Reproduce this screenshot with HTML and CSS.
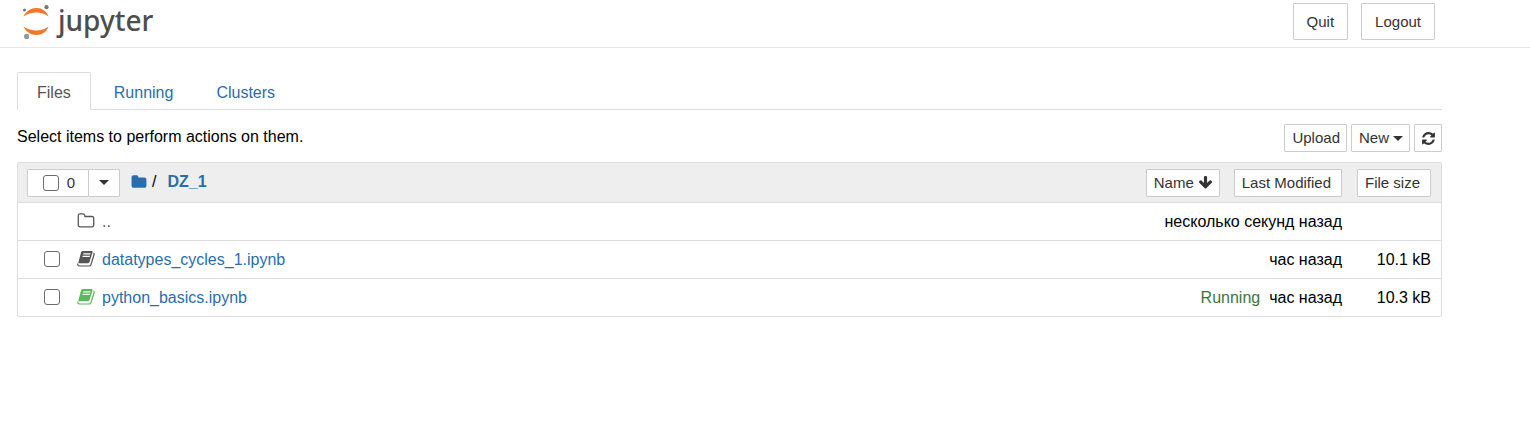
FILE: index.html
```html
<!DOCTYPE html>
<html lang="en">
<head>
<meta charset="utf-8">
<title>Jupyter Notebook</title>
<link rel="stylesheet" href="styles.css">
</head>
<body>
<svg class="sprite" aria-hidden="true">
  <symbol id="folder" viewBox="0 0 1792 1792"><path d="M1728 608v704q0 92-66 158t-158 66h-1216q-92 0-158-66t-66-158v-960q0-92 66-158t158-66h320q92 0 158 66t66 158v32h672q92 0 158 66t66 158z"/></symbol>
  <symbol id="folder-open" viewBox="0 0 1792 1792"><path d="M1600 1312v-704q0-40-28-68t-68-28h-704q-40 0-68-28t-28-68v-64q0-40-28-68t-68-28h-320q-40 0-68 28t-28 68v960q0 40 28 68t68 28h1216q40 0 68-28t28-68zm128-704v704q0 92-66 158t-158 66h-1216q-92 0-158-66t-66-158v-960q0-92 66-158t158-66h320q92 0 158 66t66 158v32h672q92 0 158 66t66 158z"/></symbol>
  <symbol id="book" viewBox="0 0 18 18">
    <path fill-rule="evenodd" d="M5.500 1h9q1.500 0 1 1.500l-3 9.500q-.4 1.200-1.800 1.200H1.200L4 2.500Q4.400 1 5.500 1zM6.500 3.300l-.4 1.200h7.200l.4-1.200zM5.800 5.700l-.4 1.200h7.200l.4-1.200z"/>
    <path fill="none" stroke="currentColor" stroke-width="1.200" stroke-linejoin="round" d="M16.400 3q1 .5.700 1.500l-3.200 10.300q-.3 1.200-1.700 1.200H2.700q-2.200 0-1.900-2.300"/>
  </symbol>
  <symbol id="refresh" viewBox="0 0 1792 1792"><path d="M1639 1056q0 5-1 7-64 268-268 434.500t-478 166.500q-146 0-282.500-55t-243.500-157l-129 129q-19 19-45 19t-45-19-19-45v-448q0-26 19-45t45-19h448q26 0 45 19t19 45-19 45l-137 137q71 66 161 102t187 36q134 0 250-65t186-179q11-17 53-117 8-23 30-23h192q13 0 22.500 9.500t9.500 22.500zm25-800v448q0 26-19 45t-45 19h-448q-26 0-45-19t-19-45 19-45l138-138q-148-137-349-137-134 0-250 65t-186 179q-11 17-53 117-8 23-30 23h-199q-13 0-22.500-9.500t-9.500-22.500v-7q65-268 270-434.500t480-166.500q146 0 284 55.500t245 156.500l130-129q19-19 45-19t45 19 19 45z"/></symbol>
  <symbol id="arrow-down" viewBox="0 0 1792 1792"><path d="M1675 832q0 53-37 90l-651 652q-39 37-91 37-53 0-90-37l-651-652q-38-36-38-90 0-53 38-91l74-75q39-37 91-37 53 0 90 37l294 294v-704q0-52 38-90t90-38h128q52 0 90 38t38 90v704l294-294q37-37 90-37 52 0 91 37l75 75q37 39 37 91z"/></symbol>
</svg>

<header class="header">
  <a class="brand" href="#">
    <svg class="brand-mark" viewBox="0 0 28 36" aria-hidden="true">
      <path fill="#f37726" d="M1.500 13.500C4 8 9 5 14.500 5s10 3 12 8.500C23 10.800 19 9.600 14.500 9.600S5 10.800 1.500 13.500z"/>
      <path fill="#f37726" d="M1.500 23.500C4 29 9 32 14.500 32s10-3 12-8.500C23 26.200 19 27.400 14.500 27.400S5 26.200 1.500 23.500z"/>
      <circle fill="#767677" cx="24.500" cy="4.200" r="2.100"/>
      <circle fill="#767677" cx="2.500" cy="7" r="1.500"/>
      <circle fill="#989798" cx="4.600" cy="33.400" r="2.600"/>
    </svg>
    <span>jupyter</span>
  </a>
  <div class="header-actions">
    <button class="btn btn-large" type="button">Quit</button>
    <button class="btn btn-large" type="button">Logout</button>
  </div>
</header>

<main class="site">
  <nav class="tabs">
    <a class="tab active" href="#files">Files</a>
    <a class="tab" href="#running">Running</a>
    <a class="tab" href="#clusters">Clusters</a>
  </nav>

  <div class="toolbar">
    <p class="hint">Select items to perform actions on them.</p>
    <div class="toolbar-actions">
      <button class="btn btn-tight" type="button">Upload</button>
      <button class="btn btn-tight" type="button">New <span class="caret"></span></button>
      <button class="btn btn-icon" type="button" aria-label="Refresh"><svg class="icon-small"><use href="#refresh"/></svg></button>
    </div>
  </div>

  <div class="list">
    <table class="files">
      <thead>
        <tr>
          <th colspan="3">
            <div class="list-header">
              <div class="select-group">
                <label class="btn select-all"><input class="check" type="checkbox"> 0</label>
                <button class="btn select-menu" type="button" aria-label="Select by type"><span class="caret"></span></button>
              </div>
              <div class="crumbs">
                <a href="#" aria-label="Home"><svg class="icon"><use href="#folder"/></svg></a>
                <span class="slash">/</span>
                <a class="crumb" href="#">DZ_1</a>
              </div>
              <div class="sorts">
                <button class="btn btn-tight" type="button">Name <svg class="icon-small"><use href="#arrow-down"/></svg></button>
                <button class="btn btn-sort" type="button">Last Modified</button>
              </div>
            </div>
          </th>
          <th class="size"><button class="btn btn-sort" type="button">File size</button></th>
        </tr>
      </thead>
      <tbody>
        <tr>
          <td class="pick"></td>
          <td><a class="file parent" href="#"><svg class="icon"><use href="#folder-open"/></svg><span>..</span></a></td>
          <td class="modified">несколько секунд назад</td>
          <td class="size"></td>
        </tr>
        <tr>
          <td class="pick"><input class="check" type="checkbox" aria-label="datatypes_cycles_1.ipynb"></td>
          <td><a class="file" href="#"><svg class="icon icon-idle"><use href="#book"/></svg><span>datatypes_cycles_1.ipynb</span></a></td>
          <td class="modified">час назад</td>
          <td class="size">10.1 kB</td>
        </tr>
        <tr>
          <td class="pick"><input class="check" type="checkbox" aria-label="python_basics.ipynb"></td>
          <td><a class="file" href="#"><svg class="icon icon-live"><use href="#book"/></svg><span>python_basics.ipynb</span></a></td>
          <td class="modified"><span class="running">Running</span>час назад</td>
          <td class="size">10.3 kB</td>
        </tr>
      </tbody>
    </table>
  </div>
</main>
</body>
</html>
```
FILE: styles.css
```css
* {
  box-sizing: border-box;
}

body {
  margin: 0;
  background: #fff;
  color: #000;
  font: 16px/20px "Liberation Sans", Arial, sans-serif;
}

a {
  color: #296eaa;
  text-decoration: none;
}

.sprite {
  display: none;
}

.icon {
  flex: none;
  width: 18px;
  height: 18px;
  fill: currentColor;
}

.icon-small {
  flex: none;
  width: 15px;
  height: 15px;
  fill: currentColor;
}

.btn {
  display: inline-flex;
  align-items: center;
  justify-content: center;
  gap: 4px;
  height: 28px;
  margin: 0;
  padding: 0 7px;
  border: 1px solid #ccc;
  border-radius: 1px;
  background: #fff;
  color: #333;
  font: 15px/20px "Liberation Sans", Arial, sans-serif;
  white-space: nowrap;
}

.btn-large {
  height: 37px;
  padding: 0 13px;
}

.btn-tight {
  padding: 0 6px 0 7px;
}

.btn-icon {
  width: 28px;
  padding: 0;
}

.caret {
  border: 5px solid transparent;
  border-top-color: currentColor;
  border-bottom: 0;
}

.header {
  display: flex;
  justify-content: space-between;
  height: 48px;
  padding: 3px 95px 0 22px;
  border-bottom: 1px solid #e7e7e7;
}

.brand {
  display: flex;
  gap: 8px;
  color: #4e4e4e;
  font: 500 28px/34px "Noto Sans", "Open Sans", sans-serif;
}

.brand-mark {
  width: 28px;
  height: 36px;
}

.header-actions {
  display: flex;
  gap: 13px;
}

.site {
  margin: 24px 88px 0 17px;
}

.tabs {
  display: flex;
  gap: 3px;
  border-bottom: 1px solid #ddd;
}

.tab {
  margin-bottom: -1px;
  padding: 10px 19px 7px;
  border: 1px solid transparent;
  border-bottom: 0;
  border-radius: 2px 2px 0 0;
}

.tab.active {
  border-color: #ddd;
  background: #fff;
  color: #555;
}

.toolbar {
  display: flex;
  align-items: center;
  justify-content: space-between;
  margin: 14px 0 10px;
}

.hint {
  margin: 0;
  padding-bottom: 2px;
}

.toolbar-actions {
  display: flex;
  gap: 4px;
}

.list {
  border: 1px solid #ddd;
  border-radius: 2px;
}

.files {
  width: 100%;
  border-collapse: collapse;
}

.files th {
  height: 39px;
  padding: 1px 0 0;
  background: #eee;
  font-weight: normal;
}

.files td {
  height: 38px;
  padding: 1px 0 0;
  border-top: 1px solid #ddd;
}

.files .pick {
  width: 59px;
  padding: 0 0 0 26px;
}

.files .modified {
  text-align: right;
}

.files .size {
  width: 99px;
  padding-right: 10px;
  text-align: right;
}

.check {
  display: block;
  width: 16px;
  height: 16px;
  margin: 0;
  border: 1px solid #6b6b6b;
  border-radius: 3px;
  background: #fff;
  appearance: none;
}

.check:checked {
  background: #296eaa;
}

.list-header {
  display: flex;
  align-items: center;
  padding-left: 9px;
}

.select-group {
  display: flex;
}

.select-all {
  gap: 8px;
  width: 62px;
  padding-left: 9px;
}

.select-menu {
  width: 32px;
  margin-left: -1px;
}

.crumbs {
  display: flex;
  align-items: center;
  margin-left: 11px;
  padding-bottom: 2px;
}

.crumbs .icon {
  display: block;
  width: 16px;
  height: 16px;
}

.slash {
  margin: 0 11px 0 5px;
}

.crumb {
  font-weight: bold;
}

.sorts {
  display: flex;
  gap: 14px;
  margin-left: auto;
}

.btn-sort {
  padding: 0 10px 0 7px;
}

.file {
  display: flex;
  align-items: center;
  gap: 7px;
}

.file .icon {
  margin-bottom: 2px;
}

.parent {
  color: #555;
}

.icon-idle {
  color: #555;
}

.icon-live {
  color: #5cb85c;
}

.running {
  margin-right: 9px;
  color: #3c763d;
}
```
